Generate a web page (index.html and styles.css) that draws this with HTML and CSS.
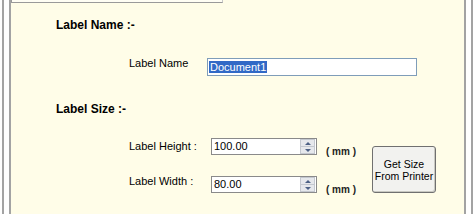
FILE: index.html
```html
<!DOCTYPE html>
<html>
<head>
    <title>Label Settings</title>
    <meta name="viewport" content="width=device-width, initial-scale=1">
    <link rel="stylesheet" href="styles.css">
</head>
<body>

    <div class="window">
        <div class="panel">
            <div class="top-box"></div>

            <div class="content">
                <div class="heading">Label Name :-</div>

                <div class="row name-row">
                    <span class="label name-label">Label Name</span>
                    <div class="textbox">
                        <span class="selected">Document1</span>
                    </div>
                </div>

                <div class="heading size-heading">Label Size :-</div>

                <div class="size-block">
                    <div class="size-rows">
                        <div class="row num-row">
                            <span class="label size-label">Label Height :</span>
                            <div class="num">
                                <span class="num-value">100.00</span>
                                <div class="spin">
                                    <span class="arrow up"></span>
                                    <span class="arrow down"></span>
                                </div>
                            </div>
                            <span class="unit">( mm )</span>
                        </div>
                        <div class="row num-row width-row">
                            <span class="label size-label">Label Width :</span>
                            <div class="num">
                                <span class="num-value">80.00</span>
                                <div class="spin">
                                    <span class="arrow up"></span>
                                    <span class="arrow down"></span>
                                </div>
                            </div>
                            <span class="unit">( mm )</span>
                        </div>
                    </div>

                    <button class="printer-button">Get Size<br>From Printer</button>
                </div>
            </div>
        </div>
    </div>

</body>
</html>
```

FILE: styles.css
```css
* {
    box-sizing: border-box;
}

body {
    margin: 0;
    padding: 0;
    background-color: #ffffff;
    font-family: "Liberation Sans", Arial, sans-serif;
    font-size: 11px;
    color: #000;
}

.window {
    margin: 0 1px 0 2px;
    height: 214px;
    border-left: 2px solid #a3a3a3;
    border-right: 2px solid #a3a3a3;
    padding: 0 5px;
}

.panel {
    height: 100%;
    background-color: #fffde8;
    border-left: 2px solid #a3a3a3;
    border-right: 2px solid #a3a3a3;
}

.top-box {
    width: 212px;
    height: 3px;
    border: 1px solid #9a9a9a;
    border-top: none;
    border-right-color: #c8c8c8;
    background-color: #fffef4;
}

.content {
    padding-left: 45px;
}

.heading {
    font-size: 12px;
    font-weight: bold;
    line-height: 14px;
    margin-top: 15px;
}

.size-heading {
    margin-top: 26px;
}

.row {
    display: flex;
    align-items: center;
}

.name-row {
    height: 18px;
    margin-top: 26px;
}

.label {
    line-height: 13px;
}

.name-label {
    margin-left: 73px;
    margin-top: -8px;
    width: 78px;
}

.textbox {
    width: 210px;
    height: 18px;
    border: 1px solid #7f9db9;
    background-color: #fff;
    padding: 2px 1px;
    line-height: 12px;
}

.selected {
    background-color: #3169c6;
    color: #fff;
    padding: 0 1px;
}

.size-block {
    display: flex;
    align-items: flex-end;
    margin-top: 22px;
}

.num-row {
    height: 17px;
}

.size-label {
    margin-left: 73px;
    width: 82px;
}

.width-row {
    margin-top: 21px;
}

.width-row .size-label {
    margin-top: -6px;
}

.num {
    display: flex;
    width: 106px;
    height: 17px;
    border: 1px solid #8a8a8a;
    background-color: #fff;
}

.num-value {
    flex: 1;
    padding: 1px 2px;
    line-height: 13px;
}

.spin {
    width: 15px;
    margin: 0 1px 0 0;
    display: flex;
    flex-direction: column;
    border: 1px solid #c4c8cf;
    background-color: #e6e8ec;
}

.arrow {
    flex: 1;
    display: flex;
    justify-content: center;
    align-items: center;
}

.arrow::before {
    content: "";
    border-left: 3px solid transparent;
    border-right: 3px solid transparent;
}

.up {
    border-bottom: 1px solid #c4c8cf;
}

.up::before {
    border-bottom: 3px solid #4d6185;
}

.down::before {
    border-top: 3px solid #4d6185;
}

.unit {
    width: 30px;
    margin-left: 9px;
    margin-top: 10px;
    font-size: 10px;
    font-weight: bold;
    color: #222;
}

.printer-button {
    width: 64px;
    height: 47px;
    margin-left: 16px;
    padding: 0;
    font-family: "Liberation Sans", Arial, sans-serif;
    font-size: 10.5px;
    line-height: 12px;
    border: 1px solid #707070;
    border-radius: 3px;
    background-color: #f2f2ef;
    box-shadow: inset -1px -1px 0 #c9c9c2;
    color: #000;
}
```
